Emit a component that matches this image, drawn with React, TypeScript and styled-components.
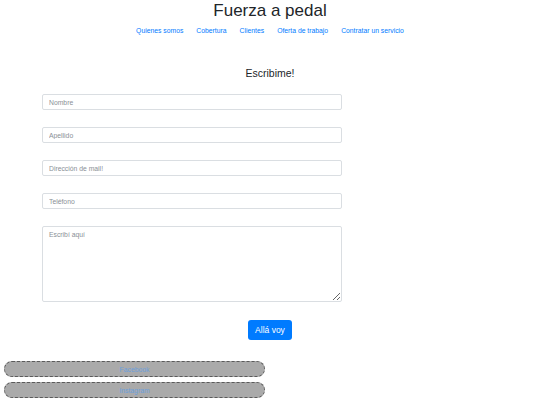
import React from "react";
import styled, { createGlobalStyle } from "styled-components";

const GlobalStyle = createGlobalStyle`
  html, body {
    margin: 0;
    padding: 0;
    background: #ffffff;
    font-family: "Liberation Sans", Arial, sans-serif;
    color: #212529;
  }
`;

const Page = styled.div`
  width: 540px;
  display: flex;
  flex-direction: column;
`;

const Header = styled.header`
  display: flex;
  flex-direction: column;
  align-items: center;
`;

const Title = styled.h1`
  margin: 0;
  font-size: 17px;
  font-weight: 400;
  line-height: 22px;
  color: #212529;
`;

const Nav = styled.nav`
  display: flex;
  gap: 13px;
  margin-top: 4px;
`;

const NavLink = styled.a`
  font-size: 6.8px;
  line-height: 10px;
  color: #007bff;
  text-decoration: none;
`;

const FormSection = styled.section`
  display: flex;
  flex-direction: column;
  margin-top: 30px;
`;

const FormTitle = styled.h2`
  margin: 0;
  text-align: center;
  font-size: 10.5px;
  font-weight: 400;
  line-height: 14px;
`;

const Fields = styled.div`
  display: flex;
  flex-direction: column;
  gap: 17px;
  margin: 14px 0 0 42px;
  width: 300px;
`;

const Input = styled.input`
  box-sizing: border-box;
  width: 100%;
  height: 16px;
  padding: 0 6px;
  border: 1px solid #dadee2;
  border-radius: 2px;
  font-family: inherit;
  font-size: 6.8px;
  color: #495057;
  outline: none;
  &::placeholder {
    color: #8a9096;
  }
`;

const TextArea = styled.textarea`
  box-sizing: border-box;
  width: 100%;
  height: 76px;
  padding: 4px 6px;
  border: 1px solid #dadee2;
  border-radius: 2px;
  font-family: inherit;
  font-size: 6.8px;
  color: #495057;
  outline: none;
  display: block;
  &::placeholder {
    color: #8a9096;
  }
`;

const ButtonRow = styled.div`
  display: flex;
  justify-content: center;
  margin-top: 18px;
`;

const SubmitButton = styled.button`
  width: 44px;
  height: 20px;
  border: none;
  border-radius: 3px;
  background: #007bff;
  color: #ffffff;
  font-family: inherit;
  font-size: 8.5px;
  padding: 0;
`;

const Social = styled.div`
  display: flex;
  flex-direction: column;
  gap: 5px;
  margin: 21px 0 0 4px;
  width: 261px;
`;

const SocialLink = styled.a`
  box-sizing: border-box;
  height: 16px;
  display: flex;
  align-items: center;
  justify-content: center;
  background: #aaaaaa;
  border: 1px dashed #5a5a5a;
  border-radius: 8px;
  color: #6a9fdc;
  font-size: 6.8px;
  text-decoration: none;
`;

export default function App() {
  return (
    <Page>
      <GlobalStyle />
      <Header>
        <Title>Fuerza a pedal</Title>
        <Nav>
          <NavLink href="#">Quienes somos</NavLink>
          <NavLink href="#">Cobertura</NavLink>
          <NavLink href="#">Clientes</NavLink>
          <NavLink href="#">Oferta de trabajo</NavLink>
          <NavLink href="#">Contratar un servicio</NavLink>
        </Nav>
      </Header>
      <FormSection>
        <FormTitle>Escribime!</FormTitle>
        <Fields>
          <Input placeholder="Nombre" />
          <Input placeholder="Apellido" />
          <Input placeholder="Dirección de mail!" />
          <Input placeholder="Teléfono" />
          <TextArea placeholder="Escribí aquí" />
        </Fields>
        <ButtonRow>
          <SubmitButton>Allá voy</SubmitButton>
        </ButtonRow>
      </FormSection>
      <Social>
        <SocialLink href="#">Facebook</SocialLink>
        <SocialLink href="#">Instagram</SocialLink>
      </Social>
    </Page>
  );
}
